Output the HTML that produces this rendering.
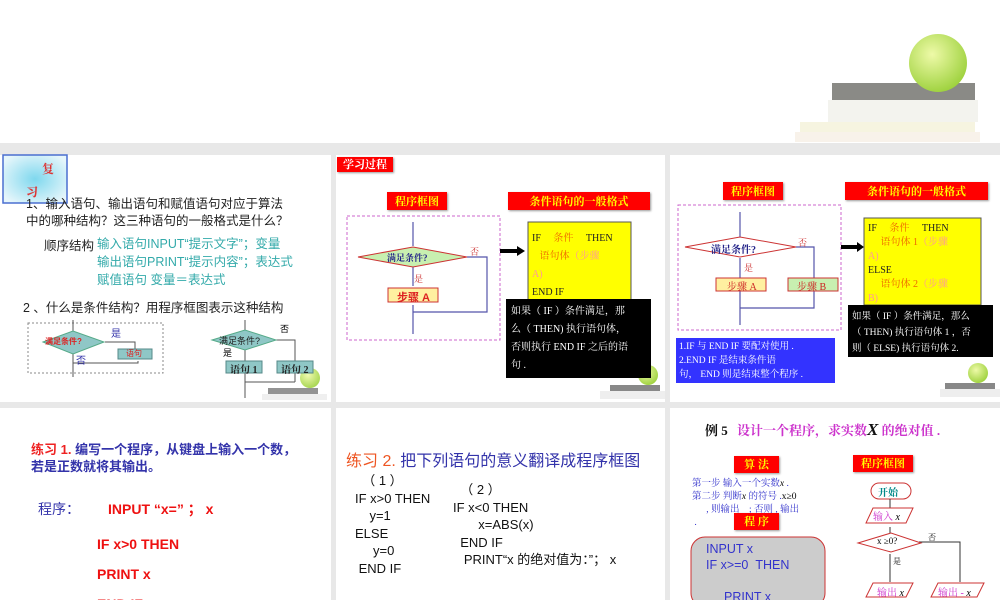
<!DOCTYPE html><html><head><meta charset="utf-8"><style>
html,body{margin:0;width:1000px;height:600px;overflow:hidden}
body{position:relative;background:#fff;font-family:"Liberation Sans","Noto Sans CJK SC",sans-serif}
.a{position:absolute;white-space:nowrap}
.p{position:absolute;background:#fff}
.rb{position:absolute;background:#f00;color:#ff0;font-family:"Noto Serif CJK SC",serif;font-weight:bold;font-size:11px;text-align:center;box-shadow:1px 1px 2px #999}
.s{font-family:"Liberation Serif","Noto Serif CJK SC",serif}
</style></head><body>
<div class="a" style="left:0;top:143px;width:1000px;height:457px;background:#e8e8e8"></div>
<div class="p" style="left:0;top:155px;width:331px;height:247px"></div>
<div class="p" style="left:336px;top:155px;width:329px;height:247px"></div>
<div class="p" style="left:670px;top:155px;width:330px;height:247px"></div>
<div class="p" style="left:0;top:408px;width:331px;height:192px"></div>
<div class="p" style="left:336px;top:408px;width:329px;height:192px"></div>
<div class="p" style="left:670px;top:408px;width:330px;height:192px"></div>

<svg class="a" style="left:0;top:0" width="1000" height="600">
<defs><radialGradient id="ap" cx="0.4" cy="0.35" r="0.7"><stop offset="0" stop-color="#eefaa8"/><stop offset="1" stop-color="#9bd03a"/></radialGradient>
<radialGradient id="cy" cx="0.5" cy="0.5" r="0.6"><stop offset="0" stop-color="#7fd8ee"/><stop offset="1" stop-color="#e6f6fb"/></radialGradient></defs>
<rect x="832" y="83" width="143" height="17" fill="#8a8a86"/>
<rect x="828" y="100" width="150" height="22" fill="#f3f3ee"/>
<rect x="800" y="122" width="175" height="10" fill="#f6f4e0"/>
<rect x="795" y="132" width="185" height="10" fill="#f8f2ea"/>
<circle cx="938" cy="63" r="29" fill="url(#ap)"/>
<g opacity="0.9"><rect x="268" y="388" width="50" height="6" fill="#888"/><rect x="262" y="394" width="65" height="6" fill="#eee"/><circle cx="310" cy="378" r="10" fill="url(#ap)"/></g>
<g><rect x="610" y="385" width="50" height="6" fill="#888"/><rect x="600" y="391" width="65" height="8" fill="#eee"/><circle cx="648" cy="375" r="10" fill="url(#ap)"/></g>
<g><rect x="945" y="383" width="50" height="6" fill="#888"/><rect x="940" y="389" width="60" height="8" fill="#eee"/><circle cx="978" cy="373" r="10" fill="url(#ap)"/></g>
<rect x="3" y="155" width="64" height="48" fill="url(#cy)" stroke="#4a6fd0" stroke-width="1.5"/>
<rect x="28" y="323" width="135" height="50" fill="none" stroke="#888" stroke-dasharray="2,2"/>
<path d="M73,320V331M105,342H135V351M73,354V368M73,363H138V361M73,368V377" stroke="#555" fill="none"/>
<path d="M43,342L73,331L104,342L73,354z" fill="#8fc7c6" stroke="#5a8"/>
<rect x="118" y="349" width="34" height="10" fill="#8fc7c6" stroke="#588"/>
<path d="M245,320V333M276,340H295V362M245,347V362M245,370V388M295,370V382M245,382H295M245,388V398" stroke="#555" fill="none"/>
<path d="M212,340L245,330L276,340L245,350z" fill="#8fc7c6" stroke="#5a8"/>
<rect x="226" y="361" width="36" height="12" fill="#8fc7c6" stroke="#588"/>
<rect x="277" y="361" width="36" height="12" fill="#8fc7c6" stroke="#588"/>
<rect x="347" y="216" width="153" height="124" fill="none" stroke="#c6c" stroke-dasharray="3,2"/>
<path d="M413,222V246M413,267V286M413,305V334M467,257H487V312H413" stroke="#55a" fill="none" stroke-width="1.2"/>
<path d="M358,257L413,247L467,257L413,267z" fill="#c8f0b0" stroke="#c33"/>
<rect x="388" y="288" width="50" height="14" fill="#fff0a0" stroke="#c33"/>
<path d="M500,251H518" stroke="#000" stroke-width="4"/><path d="M517,246L525,251L517,256z" fill="#000"/>
<rect x="528" y="222" width="103" height="80" fill="#ff0" stroke="#555"/>
<rect x="506" y="299" width="145" height="79" fill="#000"/>
<rect x="678" y="205" width="163" height="125" fill="none" stroke="#c6c" stroke-dasharray="3,2"/>
<path d="M740,212V238M740,258V279M740,290V325M796,247H814V279M740,308H814V290" stroke="#55a" fill="none" stroke-width="1.2"/>
<path d="M685,247L740,237L796,247L740,257z" fill="#fff" stroke="#c33"/>
<rect x="716" y="278" width="50" height="13" fill="#fff0a0" stroke="#c33"/>
<rect x="788" y="278" width="50" height="13" fill="#c8f0b0" stroke="#c33"/>
<path d="M841,247H858" stroke="#000" stroke-width="4"/><path d="M857,242L864,247L857,252z" fill="#000"/>
<rect x="864" y="218" width="117" height="87" fill="#ff0" stroke="#555"/>
<rect x="848" y="305" width="145" height="52" fill="#000"/>
<rect x="676" y="338" width="159" height="45" fill="#33f"/>
<rect x="691" y="537" width="134" height="70" rx="14" fill="#ccc" stroke="#c33"/>
<rect x="871" y="483" width="40" height="16" rx="8" fill="#fff" stroke="#c33"/>
<path d="M890,499V508M890,527V538M890,554V582M919,542H960V582" stroke="#333" fill="none"/>
<path d="M873,508H913L906,523H866z" fill="#fff" stroke="#c33"/>
<path d="M858,543L891,533L921,543L891,552z" fill="#fff" stroke="#c33"/>
<path d="M873,583H913L906,597H866z" fill="#fff" stroke="#c33"/>
<path d="M938,583H984L977,597H931z" fill="#fff" stroke="#c33"/>
</svg>

<div class="a s" style="left:42px;top:160px;color:#d33;font-weight:bold;font-size:12px">复</div>
<div class="a s" style="left:26px;top:183px;color:#d33;font-weight:bold;font-size:12px">习</div>
<div class="a" style="left:26px;top:196px;font-size:12.5px;color:#222;line-height:17px">1、输入语句、输出语句和赋值语句对应于算法<br>中的哪种结构？这三种语句的一般格式是什么？</div>
<div class="a" style="left:44px;top:235px;font-size:12.5px;color:#222">顺序结构</div>
<div class="a" style="left:97px;top:235px;font-size:12.5px;color:#3aa;line-height:18px">输入语句INPUT“提示文字”；变量<br>输出语句PRINT“提示内容”；表达式<br>赋值语句  变量＝表达式</div>
<div class="a" style="left:23px;top:297px;font-size:12.5px;color:#222">2 、什么是条件结构？用程序框图表示这种结构</div>
<div class="a" style="left:45px;top:336px;font-size:8px;color:#d22;font-weight:bold">满足条件?</div>
<div class="a" style="left:111px;top:325px;font-size:10px;color:#33a">是</div>
<div class="a" style="left:76px;top:352px;font-size:10px;color:#33a">否</div>
<div class="a" style="left:126px;top:348px;font-size:8px;color:#d22">语句</div>
<div class="a" style="left:219px;top:334px;font-size:9px;color:#222">满足条件?</div>
<div class="a" style="left:280px;top:322px;font-size:9px">否</div>
<div class="a" style="left:223px;top:346px;font-size:9px">是</div>
<div class="a s" style="left:230px;top:361px;font-size:10px;font-weight:bold;color:#222">语句 1</div>
<div class="a s" style="left:281px;top:361px;font-size:10px;font-weight:bold;color:#222">语句 2</div>

<div class="rb" style="left:337px;top:157px;width:56px;height:15px;color:#fff;line-height:15px">学习过程</div>
<div class="rb" style="left:387px;top:192px;width:60px;height:18px;line-height:18px">程序框图</div>
<div class="rb" style="left:508px;top:192px;width:142px;height:18px;line-height:18px">条件语句的一般格式</div>
<div class="a s" style="left:387px;top:251px;font-size:9px;color:#228;font-weight:bold">满足条件?</div>
<div class="a s" style="left:470px;top:245px;font-size:9px;color:#c33">否</div>
<div class="a s" style="left:414px;top:272px;font-size:9px;color:#c33">是</div>
<div class="a" style="left:397px;top:289px;font-size:11px;color:#d22;font-weight:bold">步骤 A</div>
<div class="a s" style="left:532px;top:230px;font-size:10px;line-height:18px;color:#222">IF <span style="color:#e60;margin:0 10px">条件</span> THEN<br>&nbsp;&nbsp;&nbsp;<span style="color:#e60">语句体</span><span style="color:#f99">（步骤</span><br><span style="color:#f99">A)</span><br>END IF</div>
<div class="a s" style="left:511px;top:303px;font-size:10px;line-height:18px;color:#fff">如果（ IF ）条件满足，那<br>么（ THEN) 执行语句体，<br>否则执行 END IF 之后的语<br>句 .</div>

<div class="rb" style="left:723px;top:182px;width:60px;height:18px;line-height:18px">程序框图</div>
<div class="rb" style="left:845px;top:182px;width:143px;height:18px;line-height:18px">条件语句的一般格式</div>
<div class="a s" style="left:711px;top:241px;font-size:10px;color:#228;font-weight:bold">满足条件?</div>
<div class="a s" style="left:798px;top:236px;font-size:9px;color:#c33">否</div>
<div class="a s" style="left:744px;top:261px;font-size:9px;color:#c33">是</div>
<div class="a s" style="left:727px;top:278px;font-size:10px;color:#c22">步骤 A</div>
<div class="a s" style="left:797px;top:278px;font-size:10px;color:#c22">步骤 B</div>
<div class="a s" style="left:868px;top:222px;font-size:10px;line-height:14px;color:#222">IF <span style="color:#e60;margin:0 10px">条件</span> THEN<br>&nbsp;&nbsp;&nbsp;&nbsp;&nbsp;<span style="color:#e60">语句体 1</span><span style="color:#f99">（步骤</span><br><span style="color:#f99">A)</span><br>ELSE<br>&nbsp;&nbsp;&nbsp;&nbsp;&nbsp;<span style="color:#e60">语句体 2</span><span style="color:#f99">（步骤</span><br><span style="color:#f99">B)</span></div>
<div class="a s" style="left:852px;top:309px;font-size:9.5px;line-height:16px;color:#fff">如果（ IF ）条件满足，那么<br>（ THEN) 执行语句体 1 ，否<br>则（ ELSE) 执行语句体 2.</div>
<div class="a s" style="left:679px;top:340px;font-size:9.5px;line-height:14px;color:#fff">1.IF 与 END IF 要配对使用 .<br>2.END IF 是结束条件语<br>句， END 则是结束整个程序 .</div>

<div class="a" style="left:31px;top:441px;font-size:13px;line-height:17px;color:#33a;font-weight:bold"><span style="color:#e22">练习 1.</span> 编写一个程序，从键盘上输入一个数，<br>若是正数就将其输出。</div>
<div class="a" style="left:38px;top:499px;font-size:14px;color:#33a">程序：</div>
<div class="a" style="left:108px;top:499px;font-size:14px;color:#e11;font-weight:bold">INPUT “x=” ；  x</div>
<div class="a" style="left:97px;top:529px;font-size:14px;color:#e11;font-weight:bold;line-height:30px">IF x>0 THEN<br>PRINT x<br>END IF</div>

<div class="a" style="left:346px;top:447px;font-size:16px;color:#33a"><span style="color:#e52">练习 2.</span> 把下列语句的意义翻译成程序框图</div>
<div class="a" style="left:355px;top:472px;font-size:13px;line-height:17.5px;color:#111">&nbsp;&nbsp;（ 1 ）<br>IF x&gt;0 THEN<br>&nbsp;&nbsp;&nbsp;&nbsp;y=1<br>ELSE<br>&nbsp;&nbsp;&nbsp;&nbsp;&nbsp;y=0<br>&nbsp;END IF</div>
<div class="a" style="left:453px;top:481px;font-size:13px;line-height:17.5px;color:#111">&nbsp;&nbsp;（ 2 ）<br>IF x&lt;0 THEN<br>&nbsp;&nbsp;&nbsp;&nbsp;&nbsp;&nbsp;&nbsp;x=ABS(x)<br>&nbsp;&nbsp;END IF<br>&nbsp;&nbsp;&nbsp;PRINT“x 的绝对值为：”；  x</div>

<div class="a s" style="left:705px;top:420px;font-size:13px;color:#111;font-weight:bold">例 5 <span style="color:#c3c;margin-left:6px">设计一个程序，求实数</span><span style="font-size:17px;font-style:italic">X</span> <span style="color:#c3c">的绝对值 .</span></div>
<div class="rb" style="left:734px;top:456px;width:45px;height:17px;line-height:17px">算 法</div>
<div class="rb" style="left:853px;top:455px;width:60px;height:17px;line-height:17px">程序框图</div>
<div class="a s" style="left:692px;top:478px;font-size:9.5px;line-height:13px;color:#33c">第一步 输入一个实数<i style="color:#000">x</i> .<br>第二步 判断<i style="color:#000">x</i> 的符号 .<span style="color:#000">x≥0</span><br>&nbsp;&nbsp;&nbsp;&nbsp;&nbsp;&nbsp;, 则输出 &nbsp;&nbsp;&nbsp;; 否则 , 输出<br>&nbsp;.</div>
<div class="rb" style="left:734px;top:513px;width:45px;height:17px;line-height:17px">程 序</div>
<div class="a" style="left:706px;top:541px;font-size:12.5px;line-height:16px;color:#33c">INPUT x<br>IF x&gt;=0 &nbsp;THEN<br><br><span style="margin-left:18px">PRINT x</span></div>
<div class="a s" style="left:878px;top:484px;font-size:10px;color:#088;font-weight:bold">开始</div>
<div class="a s" style="left:873px;top:508px;font-size:10px;color:#c3c">输入 <i style="color:#000">x</i></div>
<div class="a s" style="left:877px;top:536px;font-size:9px;color:#000">x ≥0?</div>
<div class="a s" style="left:928px;top:532px;font-size:8px">否</div>
<div class="a s" style="left:893px;top:556px;font-size:8px">是</div>
<div class="a s" style="left:877px;top:584px;font-size:10px;color:#c3c">输出 <i style="color:#000">x</i></div>
<div class="a s" style="left:938px;top:584px;font-size:10px;color:#c3c">输出 - <i style="color:#000">x</i></div>
</body></html>
